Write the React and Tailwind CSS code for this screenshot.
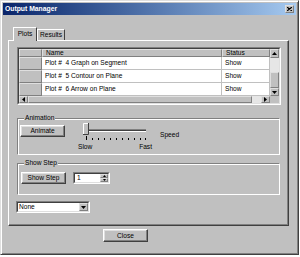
import React from "react";

const raised =
  "bg-[#c0c0c0] border border-t-white border-l-white border-r-[#404040] border-b-[#404040] shadow-[inset_-1px_-1px_0_#808080,inset_1px_1px_0_#dfdfdf]";
const raisedThin =
  "bg-[#c0c0c0] border border-t-[#dfdfdf] border-l-[#dfdfdf] border-r-[#808080] border-b-[#808080]";

function GroupBox({ label, className, children }) {
  return (
    <div className={"relative border border-t-[#808080] border-l-[#808080] border-r-white border-b-white shadow-[inset_1px_1px_0_#fff,1px_1px_0_#808080_inset] " + className}>
      <span className="absolute -top-[5px] left-[6px] bg-[#c0c0c0] px-[1px] leading-[8px]">{label}</span>
      {children}
    </div>
  );
}

function Row({ plot, status }) {
  return (
    <div className="flex h-[13px]">
      <div className={"w-[23px] h-full " + raisedThin}></div>
      <div className="w-[180px] h-full bg-white border-b border-r border-[#c0c0c0] flex items-center pl-[3px] whitespace-pre">{plot}</div>
      <div className="w-[48px] h-full bg-white border-b border-r border-[#c0c0c0] flex items-center pl-[3px]">{status}</div>
    </div>
  );
}

export default function App() {
  return (
    <div className="w-[300px] h-[257px] bg-white font-['Liberation_Sans',Arial,sans-serif] text-[6.6px] text-black">
      <div className="w-[299px] h-[255px] bg-[#c0c0c0] border border-t-[#dfdfdf] border-l-[#dfdfdf] border-r-[#404040] border-b-[#404040] shadow-[inset_1px_1px_0_#fff,inset_-1px_-1px_0_#808080] p-[2px] flex flex-col">
        {/* Title bar */}
        <div className="h-[12px] bg-gradient-to-r from-[#0a246a] to-[#a6caf0] flex items-center justify-between pl-[2px] pr-[2px]">
          <span className="text-white font-bold text-[6.8px] leading-[8px]">Output Manager</span>
          <div className={"w-[9px] h-[8px] flex items-center justify-center " + raisedThin}>
            <svg width="5" height="4" viewBox="0 0 5 4">
              <path d="M0 0 L5 4 M5 0 L0 4" stroke="#000" strokeWidth="1.2" />
            </svg>
          </div>
        </div>

        {/* Tabs */}
        <div className="flex items-end ml-[10px] mt-[12px] h-[14px] relative z-10">
          <div className="w-[24px] h-[14px] bg-[#c0c0c0] border-t border-l border-white border-r border-r-[#404040] flex items-center justify-center pb-[1px]">Plots</div>
          <div className="w-[28px] h-[11px] bg-[#c0c0c0] border-t border-l border-white border-r border-r-[#404040] flex items-center justify-center mb-[1px]">Results</div>
        </div>

        {/* Tab panel */}
        <div className="ml-[5px] -mt-[1px] w-[281px] h-[186px] bg-[#c0c0c0] border border-t-white border-l-white border-r-[#404040] border-b-[#404040] shadow-[inset_-1px_-1px_0_#808080] pl-[8px] pt-[6px] flex flex-col">
          {/* Table */}
          <div className="w-[264px] h-[58px] border border-t-[#808080] border-l-[#808080] border-r-white border-b-white">
            <div className="w-full h-full border border-t-[#404040] border-l-[#404040] border-r-[#dfdfdf] border-b-[#dfdfdf] flex flex-col">
              <div className="flex h-[47px]">
                <div className="flex flex-col">
                  <div className="flex h-[8px]">
                    <div className={"w-[23px] h-full " + raisedThin}></div>
                    <div className={"w-[180px] h-full flex items-center pl-[3px] leading-[6px] " + raisedThin}>Name</div>
                    <div className={"w-[48px] h-full flex items-center pl-[3px] leading-[6px] " + raisedThin}>Status</div>
                  </div>
                  <Row plot={"Plot #  4 Graph on Segment"} status="Show" />
                  <Row plot={"Plot #  5 Contour on Plane"} status="Show" />
                  <Row plot={"Plot #  6 Arrow on Plane"} status="Show" />
                </div>
                {/* vertical scrollbar */}
                <div className="w-[9px] h-full flex flex-col bg-[#e6e6e6]">
                  <div className={"h-[9px] flex items-center justify-center " + raisedThin}>
                    <svg width="5" height="3" viewBox="0 0 5 3"><path d="M2.5 0 L5 3 L0 3 Z" fill="#000" /></svg>
                  </div>
                  <div className="flex-1"></div>
                  <div className={"h-[16px] " + raisedThin}></div>
                  <div className={"h-[8px] flex items-center justify-center " + raisedThin}>
                    <svg width="5" height="3" viewBox="0 0 5 3"><path d="M0 0 L5 0 L2.5 3 Z" fill="#000" /></svg>
                  </div>
                </div>
              </div>
              {/* horizontal scrollbar */}
              <div className="flex h-[9px]">
                <div className="w-[251px] flex bg-[#e6e6e6]">
                  <div className={"w-[9px] h-full flex items-center justify-center " + raisedThin}>
                    <svg width="3" height="5" viewBox="0 0 3 5"><path d="M0 2.5 L3 0 L3 5 Z" fill="#000" /></svg>
                  </div>
                  <div className={"w-[224px] h-full " + raisedThin}></div>
                  <div className="flex-1"></div>
                  <div className={"w-[9px] h-full flex items-center justify-center " + raisedThin}>
                    <svg width="3" height="5" viewBox="0 0 3 5"><path d="M0 0 L3 2.5 L0 5 Z" fill="#000" /></svg>
                  </div>
                </div>
                <div className="w-[9px] h-full bg-[#c0c0c0]"></div>
              </div>
            </div>
          </div>

          {/* Animation group */}
          <GroupBox label="Animation" className="mt-[13px] w-[263px] h-[37px]">
            <div className="flex items-start">
              <div className={"ml-[2px] mt-[6px] w-[45px] h-[12px] flex items-center justify-center " + raised}>Animate</div>
              <div className="ml-[13px] mt-[3px] w-[74px] flex flex-col">
                <svg className="ml-[2px]" width="72" height="20" viewBox="0 0 72 20">
                  <rect x="6" y="7" width="60" height="1" fill="#808080" />
                  <rect x="6" y="8" width="60" height="1" fill="#404040" />
                  <rect x="6" y="9" width="60" height="1" fill="#ffffff" />
                  <rect x="3" y="1" width="6" height="12" fill="#c0c0c0" />
                  <path d="M3.5 13 L3.5 1.5 L9 1.5" stroke="#ffffff" fill="none" strokeWidth="1" />
                  <path d="M3 12.5 L8.5 12.5 L8.5 1" stroke="#404040" fill="none" strokeWidth="1" />
                  <rect x="6" y="14" width="1" height="4" fill="#000" />
                  {[12, 18, 24, 30, 36, 42, 48, 54, 60, 65].map((x) => (
                    <rect key={x} x={x} y="16" width="1" height="2" fill="#000" />
                  ))}
                </svg>
                <div className="flex justify-between mt-[1px] leading-[8px]">
                  <span>Slow</span>
                  <span>Fast</span>
                </div>
              </div>
              <span className="ml-[8px] mt-[12px] leading-[8px]">Speed</span>
            </div>
          </GroupBox>

          {/* Show Step group */}
          <GroupBox label="Show Step" className="mt-[8px] w-[263px] h-[32px]">
            <div className="flex items-start">
              <div className={"ml-[3px] mt-[8px] w-[45px] h-[12px] flex items-center justify-center " + raised}>Show Step</div>
              <div className="ml-[7px] mt-[8px] w-[37px] h-[12px] border border-t-[#808080] border-l-[#808080] border-r-white border-b-white">
                <div className="w-full h-full bg-white border border-t-[#404040] border-l-[#404040] border-r-[#dfdfdf] border-b-[#dfdfdf] flex">
                  <span className="flex-1 pl-[2px] leading-[8px]">1</span>
                  <div className="w-[8px] h-full flex flex-col">
                    <div className={"flex-1 flex items-center justify-center " + raisedThin}>
                      <svg width="3" height="2" viewBox="0 0 3 2"><path d="M1.5 0 L3 2 L0 2 Z" fill="#000" /></svg>
                    </div>
                    <div className={"flex-1 flex items-center justify-center " + raisedThin}>
                      <svg width="3" height="2" viewBox="0 0 3 2"><path d="M0 0 L3 0 L1.5 2 Z" fill="#000" /></svg>
                    </div>
                  </div>
                </div>
              </div>
            </div>
          </GroupBox>

          {/* Dropdown */}
          <div className="mt-[6px] -ml-[1px] w-[74px] h-[12px] border border-t-[#808080] border-l-[#808080] border-r-white border-b-white">
            <div className="w-full h-full bg-white border border-t-[#404040] border-l-[#404040] border-r-[#dfdfdf] border-b-[#dfdfdf] flex">
              <span className="flex-1 pl-[1px] leading-[8px]">None</span>
              <div className={"w-[9px] h-full flex items-center justify-center " + raisedThin}>
                <svg width="5" height="3" viewBox="0 0 5 3"><path d="M0 0 L5 0 L2.5 3 Z" fill="#000" /></svg>
              </div>
            </div>
          </div>
        </div>

        {/* Close button */}
        <div className={"ml-[100px] mt-[3px] w-[45px] h-[13px] flex items-center justify-center " + raised}>Close</div>
      </div>
    </div>
  );
}
